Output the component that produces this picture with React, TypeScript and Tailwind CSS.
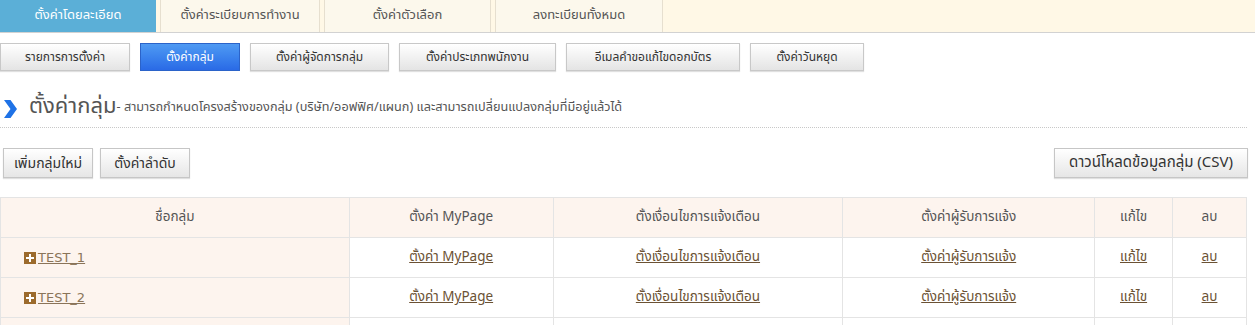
import React from 'react';

const font = { fontFamily: "Tahoma, 'Noto Sans Thai', 'Noto Sans', 'DejaVu Sans', sans-serif" };

const tabs = [
  { label: 'ตั้งค่าโดยละเอียด', w: 'w-[156px]', active: true },
  { label: 'ตั้งค่าระเบียบการทำงาน', w: 'w-[160px]' },
  { label: 'ตั้งค่าตัวเลือก', w: 'w-[167px]' },
  { label: 'ลงทะเบียนทั้งหมด', w: 'w-[168px]' },
];

const subButtons = [
  { label: 'รายการการตั้งค่า', w: 'w-[130px]' },
  { label: 'ตั้งค่ากลุ่ม', w: 'w-[100px]', active: true },
  { label: 'ตั้งค่าผู้จัดการกลุ่ม', w: 'w-[139px]' },
  { label: 'ตั้งค่าประเภทพนักงาน', w: 'w-[157px]' },
  { label: 'อีเมลคำขอแก้ไขดอกบัตร', w: 'w-[174px]' },
  { label: 'ตั้งค่าวันหยุด', w: 'w-[114px]' },
];

const cols = [
  { label: 'ชื่อกลุ่ม', w: 'w-[349px]' },
  { label: 'ตั้งค่า MyPage', w: 'w-[204px]' },
  { label: 'ตั้งเงื่อนไขการแจ้งเตือน', w: 'w-[290px]' },
  { label: 'ตั้งค่าผู้รับการแจ้ง', w: 'w-[252px]' },
  { label: 'แก้ไข', w: 'w-[78px]' },
  { label: 'ลบ', w: 'w-[74px]' },
];

const rows = ['TEST_1', 'TEST_2'];

const Btn = ({ children, className = '' }: { children: React.ReactNode; className?: string }) => (
  <button
    className={`h-[30px] border border-[#c6c6c6] bg-gradient-to-b from-white to-[#e6e6e6] text-[#333] shadow-[0_1px_1px_rgba(0,0,0,0.12)] ${className}`}
  >
    {children}
  </button>
);

const PlusIcon = () => (
  <svg width="12" height="12" viewBox="0 0 12 12" className="shrink-0">
    <rect width="12" height="12" fill="#9c6a2c" />
    <rect x="2" y="5" width="8" height="2" fill="#fff" />
    <rect x="5" y="2" width="2" height="8" fill="#fff" />
  </svg>
);

const cell = 'border border-[#e4e4e4] text-center';
const link = 'text-[#6b5234] underline';

export default function App() {
  return (
    <div className="w-[1255px] h-[325px] overflow-hidden bg-white text-[#555]" style={font}>
      {/* top tabs */}
      <div className="flex h-[33px] gap-1 border-b border-[#d2d2d2] bg-[#fff8e6]">
        {tabs.map((t) => (
          <div
            key={t.label}
            className={`${t.w} flex items-center justify-center text-[13px] ${
              t.active
                ? 'bg-[#5bafd7] text-white'
                : 'border-x border-[#e6dfcf] bg-[#fcf8ec] text-[#555]'
            }`}
          >
            {t.label}
          </div>
        ))}
      </div>

      {/* sub menu */}
      <div className="mt-[10px] flex gap-[10px]">
        {subButtons.map((b) =>
          b.active ? (
            <button
              key={b.label}
              className={`${b.w} h-[28px] border border-[#2b63c9] bg-gradient-to-b from-[#4f9af3] to-[#2a6ae6] text-[12px] text-white`}
            >
              {b.label}
            </button>
          ) : (
            <button
              key={b.label}
              className={`${b.w} h-[28px] border border-[#c8c8c8] bg-gradient-to-b from-white to-[#e4e4e4] text-[12px] text-[#333] shadow-[0_1px_1px_rgba(0,0,0,0.12)]`}
            >
              {b.label}
            </button>
          )
        )}
      </div>

      {/* heading */}
      <div className="mt-[22px] mr-[8px] flex items-end border-b border-dotted border-[#c8c8c8] pb-[6px]">
        <svg width="15" height="20" viewBox="0 0 15 20" className="ml-[3px] mb-[2px]">
          <path d="M1 1 L7.5 1 L14 10 L7.5 19 L1 19 L7.5 10 Z" fill="#1f72e6" />
        </svg>
        <span className="ml-[11px] text-[22px] leading-[28px] text-[#555]">ตั้งค่ากลุ่ม</span>
        <span className="mb-[4px] text-[12.7px] text-[#555]">
          - สามารถกำหนดโครงสร้างของกลุ่ม (บริษัท/ออฟฟิศ/แผนก) และสามารถเปลี่ยนแปลงกลุ่มที่มีอยู่แล้วได้
        </span>
      </div>

      {/* actions */}
      <div className="mt-[20px] mr-[7px] flex items-center">
        <Btn className="ml-[3px] w-[90px] text-[14px]">เพิ่มกลุ่มใหม่</Btn>
        <Btn className="ml-[7px] w-[90px] text-[14px]">ตั้งค่าลำดับ</Btn>
        <Btn className="ml-auto w-[194px] text-[15px]">ดาวน์โหลดข้อมูลกลุ่ม (CSV)</Btn>
      </div>

      {/* table */}
      <table className="mt-[19px] w-[1247px] border-collapse text-[13.5px]">
        <thead>
          <tr className="h-[40px] bg-[#fdf4ee]">
            {cols.map((c) => (
              <th key={c.label} className={`${c.w} border border-[#e4e4e4] font-normal text-[#555]`}>
                {c.label}
              </th>
            ))}
          </tr>
        </thead>
        <tbody>
          {rows.map((r) => (
            <tr key={r} className="h-[40px]">
              <td className="border border-[#e4e4e4] bg-[#fdf4ee] pl-[23px]">
                <span className="flex items-center gap-[2px]">
                  <PlusIcon />
                  <a className="text-[13px] text-[#8a7459] underline" style={{ fontFamily: "'DejaVu Sans', sans-serif" }}>
                    {r}
                  </a>
                </span>
              </td>
              <td className={cell}>
                <a className={link}>ตั้งค่า MyPage</a>
              </td>
              <td className={cell}>
                <a className={link}>ตั้งเงื่อนไขการแจ้งเตือน</a>
              </td>
              <td className={cell}>
                <a className={link}>ตั้งค่าผู้รับการแจ้ง</a>
              </td>
              <td className={cell}>
                <a className={link}>แก้ไข</a>
              </td>
              <td className={cell}>
                <a className={link}>ลบ</a>
              </td>
            </tr>
          ))}
          <tr className="h-[40px]">
            <td className="border border-[#e4e4e4] bg-[#fdf4ee]" />
            <td className={cell} />
            <td className={cell} />
            <td className={cell} />
            <td className={cell} />
            <td className={cell} />
          </tr>
        </tbody>
      </table>
    </div>
  );
}
